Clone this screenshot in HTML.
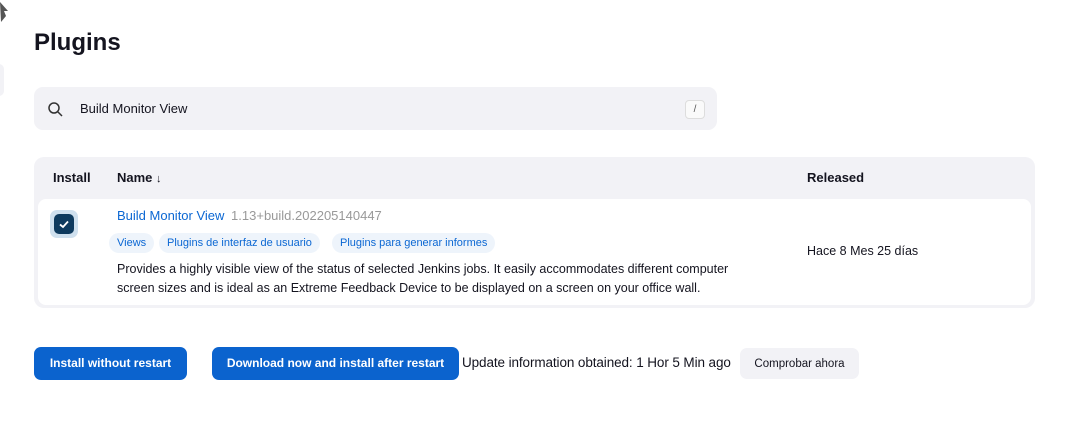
<!DOCTYPE html><html><head><style>
body{margin:0;width:1065px;height:439px;background:#fff;font-family:"Liberation Sans","DejaVu Sans",sans-serif;color:#14141f;position:relative;overflow:hidden}
.a{position:absolute}
</style></head><body>
<svg class="a" style="left:0;top:2px" width="10" height="22"><path d="M0 0 L8 9 L4 9 L6 14 L1 20 Z" fill="#555"/></svg>
<div class="a" style="left:-6px;top:64px;width:10px;height:32px;background:#f2f2f6;border-radius:6px"></div>
<div class="a" style="left:34px;top:29px;font-size:24px;font-weight:bold">Plugins</div>
<div class="a" style="left:34px;top:87px;width:683px;height:43px;background:#f2f2f6;border-radius:9px"></div>
<svg class="a" style="left:47px;top:101px" width="16" height="16"><circle cx="7" cy="7" r="5" fill="none" stroke="#333" stroke-width="1.5"/><path d="M11 11 L15 15" stroke="#333" stroke-width="1.5"/></svg>
<div class="a" style="left:80px;top:101px;font-size:13px">Build Monitor View</div>
<div class="a" style="left:685px;top:100px;width:18px;height:17px;border:1px solid #ddd;border-radius:4px;background:#fafafa;font-size:10px;text-align:center;line-height:17px;color:#555">/</div>
<div class="a" style="left:34px;top:157px;width:1001px;height:151px;background:#f2f2f6;border-radius:10px"></div>
<div class="a" style="left:53px;top:170px;font-size:13px;font-weight:bold">Install</div>
<div class="a" style="left:117px;top:170px;font-size:13px;font-weight:bold">Name <span style="font-weight:normal;font-size:11px">↓</span></div>
<div class="a" style="left:807px;top:170px;font-size:13px;font-weight:bold">Released</div>
<div class="a" style="left:38px;top:199px;width:993px;height:106px;background:#fff;border-radius:8px"></div>
<div class="a" style="left:50px;top:210px;width:28px;height:28px;background:#cfe0ee;border-radius:7px"></div>
<div class="a" style="left:54px;top:214px;width:20px;height:20px;background:#0e3a5e;border-radius:5px"></div>
<svg class="a" style="left:54px;top:214px" width="20" height="20"><path d="M6 10.5 L9 13 L14 7.5" fill="none" stroke="#fff" stroke-width="1.8"/></svg>
<div class="a" style="left:117px;top:208px;font-size:13px;color:#0b67d3">Build Monitor View <span style="color:#999;margin-left:3px">1.13+build.202205140447</span></div>
<div class="a" style="left:109px;top:233px;height:20px;line-height:20px;font-size:11px;color:#0b67d3;background:#eef4fb;border-radius:10px;padding:0 8px">Views</div>
<div class="a" style="left:159px;top:233px;height:20px;line-height:20px;font-size:11px;color:#0b67d3;background:#eef4fb;border-radius:10px;padding:0 8px">Plugins de interfaz de usuario</div>
<div class="a" style="left:332px;top:233px;height:20px;line-height:20px;font-size:11px;color:#0b67d3;background:#eef4fb;border-radius:10px;padding:0 8px">Plugins para generar informes</div>
<div class="a" style="left:117px;top:260px;width:650px;font-size:12.5px;line-height:19px">Provides a highly visible view of the status of selected Jenkins jobs. It easily accommodates different computer<br>screen sizes and is ideal as an Extreme Feedback Device to be displayed on a screen on your office wall.</div>
<div class="a" style="left:807px;top:244px;font-size:12.5px">Hace 8 Mes 25 días</div>
<div class="a" style="left:34px;top:347px;width:153px;height:33px;background:#0b63ce;border-radius:7px;color:#fff;font-size:12px;font-weight:bold;text-align:center;line-height:33px">Install without restart</div>
<div class="a" style="left:212px;top:347px;width:247px;height:33px;background:#0b63ce;border-radius:7px;color:#fff;font-size:12px;font-weight:bold;text-align:center;line-height:33px">Download now and install after restart</div>
<div class="a" style="left:462px;top:355px;font-size:13.5px;letter-spacing:-0.1px">Update information obtained: 1 Hor 5 Min ago</div>
<div class="a" style="left:740px;top:348px;width:119px;height:31px;background:#f2f2f6;border-radius:7px;font-size:11.5px;text-align:center;line-height:33px">Comprobar ahora</div>
</body></html>
